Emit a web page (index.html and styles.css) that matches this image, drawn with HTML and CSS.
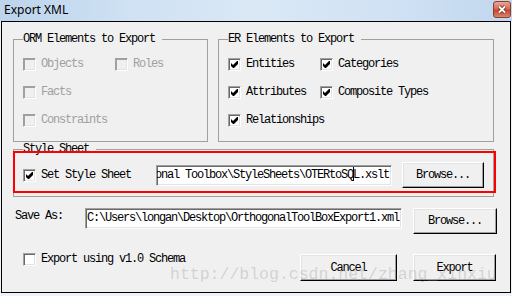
FILE: index.html
```html
<!DOCTYPE html>
<html>
<head>
<meta charset="utf-8">
<link rel="stylesheet" href="styles.css">
</head>
<body>
<div class="titlebar">
  <span class="title">Export XML</span>
  <span class="close">
    <svg width="10" height="9" viewBox="0 0 10 9">
      <path d="M2 1.5 L8 7.5 M8 1.5 L2 7.5" stroke="#6b2a1e" stroke-width="3.4" />
      <path d="M2 1.5 L8 7.5 M8 1.5 L2 7.5" stroke="#fff" stroke-width="1.8" />
    </svg>
  </span>
</div>

<div class="client">
  <div class="groups">
    <fieldset class="group orm">
      <legend>ORM Elements to Export</legend>
      <div class="options">
        <label class="check disabled"><span class="box"></span>Objects</label>
        <label class="check disabled"><span class="box"></span>Roles</label>
        <label class="check disabled"><span class="box"></span>Facts</label>
        <span></span>
        <label class="check disabled"><span class="box"></span>Constraints</label>
      </div>
    </fieldset>

    <fieldset class="group er">
      <legend>ER Elements to Export</legend>
      <div class="options">
        <label class="check"><span class="box"><svg class="tick" viewBox="0 0 7 7"><polygon points="0,2 2,4 6,0 7,0 7,3 3,7 2,7 0,5" /></svg></span>Entities</label>
        <label class="check"><span class="box"><svg class="tick" viewBox="0 0 7 7"><polygon points="0,2 2,4 6,0 7,0 7,3 3,7 2,7 0,5" /></svg></span>Categories</label>
        <label class="check"><span class="box"><svg class="tick" viewBox="0 0 7 7"><polygon points="0,2 2,4 6,0 7,0 7,3 3,7 2,7 0,5" /></svg></span>Attributes</label>
        <label class="check"><span class="box"><svg class="tick" viewBox="0 0 7 7"><polygon points="0,2 2,4 6,0 7,0 7,3 3,7 2,7 0,5" /></svg></span>Composite Types</label>
        <label class="check"><span class="box"><svg class="tick" viewBox="0 0 7 7"><polygon points="0,2 2,4 6,0 7,0 7,3 3,7 2,7 0,5" /></svg></span>Relationships</label>
      </div>
    </fieldset>
  </div>

  <fieldset class="group sheet">
    <legend>Style Sheet</legend>
    <div class="sheet-row">
      <label class="check wide"><span class="box"><svg class="tick" viewBox="0 0 7 7"><polygon points="0,2 2,4 6,0 7,0 7,3 3,7 2,7 0,5" /></svg></span>Set Style Sheet</label>
      <div class="field scroll"><span>C:\Program Files\Orthogonal Toolbox\StyleSheets\OTERtoSQ<i class="caret"></i>L.xslt</span></div>
      <button class="btn browse-sheet">Browse...</button>
    </div>
  </fieldset>

  <div class="save-row">
    <span class="save-label">Save As:</span>
    <div class="field save-field">C:\Users\longan\Desktop\OrthogonalToolBoxExport1.xml</div>
    <button class="btn browse-save">Browse...</button>
  </div>

  <div class="bottom-row">
    <label class="check legacy"><span class="box"></span>Export using v1.0 Schema</label>
    <button class="btn cancel">Cancel</button>
    <button class="btn export">Export</button>
  </div>

  <!-- annotation and watermark lie on top of the dialog -->
  <div class="mark"></div>
  <div class="watermark">http://blog.csdn.net/zhang_xinxiu</div>
</div>
</body>
</html>
```

FILE: styles.css
```css
* {
    box-sizing: border-box;
}

body {
    margin: 0;
    width: 512px;
    height: 296px;
    overflow: hidden;
    background: #edf2f8;
    color: #000;
    font: 12px/14px "Liberation Mono", monospace;
    letter-spacing: -1.2px;
}

/* title bar */
.titlebar {
    height: 21px;
    display: flex;
    align-items: flex-start;
    justify-content: space-between;
    padding-left: 4px;
    background: linear-gradient(90deg, #bcd4ec 0%, #cfe1f3 25%, #dae8f6 50%, #d1e2f4 75%, #c1d7ee 100%);
}

.title {
    font: 12px/19px "Noto Sans", sans-serif;
    letter-spacing: 0;
}

.close {
    width: 18px;
    height: 17px;
    margin: 1px 1px 0 0;
    border: 1px solid #8c3d2e;
    border-radius: 3px;
    background: linear-gradient(#eaa796, #d66a52 45%, #c4472e 55%, #d98570);
    display: flex;
    align-items: center;
    justify-content: center;
}

.close svg {
    display: block;
}

/* dialog body */
.client {
    position: relative;
    width: 510px;
    height: 272px;
    margin-left: 1px;
    border: 1px solid #000;
    background: #f0f0f0;
    padding: 10px 0 0 11px;
}

.groups {
    display: flex;
    gap: 10px;
}

.group {
    margin: 0;
    padding: 0;
    min-width: 0;
    border: 1px solid #a0a0a0;
}

.group legend {
    margin-left: 9px;
    padding: 0 7px 0 0;
    line-height: 14px;
}

.orm {
    width: 195px;
    height: 110px;
}

.er {
    width: 276px;
    height: 110px;
}

.options {
    display: grid;
    grid-template-columns: 92px auto;
    grid-auto-rows: 28px;
    padding: 4px 0 0 9px;
}

/* checkboxes */
.check {
    display: flex;
    align-items: center;
    gap: 5px;
    white-space: nowrap;
}

.box {
    flex: none;
    width: 13px;
    height: 13px;
    border: 1px solid;
    border-color: #a0a0a0 #fff #fff #a0a0a0;
    box-shadow: inset 1px 1px #696969, inset -1px -1px #e3e3e3;
    background: #fff;
}

.tick {
    display: block;
    width: 7px;
    height: 7px;
    margin: 2px;
    fill: #000;
}

.disabled {
    color: #a0a0a0;
}

.disabled .box {
    background: #f0f0f0;
    box-shadow: inset 1px 1px #a0a0a0, inset -1px -1px #e3e3e3;
}

/* style sheet group */
.sheet {
    width: 481px;
    height: 55px;
}

.sheet-row {
    display: flex;
    align-items: center;
    height: 33px;
    padding: 5px 0 0 9px;
}

.wide {
    width: 133px;
}

.field {
    height: 21px;
    border: 1px solid;
    border-color: #a0a0a0 #fff #fff #a0a0a0;
    box-shadow: inset 1px 1px #696969, inset -1px -1px #e3e3e3;
    background: #fff;
    line-height: 19px;
    padding: 0 2px 0 1px;
    white-space: nowrap;
    overflow: hidden;
}

.scroll {
    width: 236px;
    display: flex;
    justify-content: flex-end;
}

.scroll span {
    flex: none;
}

.caret {
    display: inline-block;
    width: 1px;
    height: 14px;
    margin-right: -1px;
    background: #000;
    vertical-align: -3px;
}

/* buttons */
.btn {
    height: 26px;
    padding: 0;
    border: 1px solid;
    border-color: #fff #000 #000 #fff;
    box-shadow: inset -1px -1px #a0a0a0, inset 1px 1px #e3e3e3;
    background: #f0f0f0;
    font: inherit;
    letter-spacing: inherit;
    color: #000;
}

.browse-sheet {
    width: 82px;
    margin-left: 10px;
}

/* save row */
.save-row {
    display: flex;
    align-items: flex-start;
    margin-top: 11px;
}

.save-label {
    width: 70px;
    margin-left: 2px;
    padding-top: 1px;
}

.save-field {
    width: 317px;
}

.browse-save {
    width: 84px;
    margin-left: 11px;
}

/* bottom row */
.bottom-row {
    display: flex;
    align-items: flex-start;
    margin-top: 18px;
    padding-right: 14px;
}

.legacy {
    margin: 0 auto 0 10px;
}

.cancel,
.export {
    height: 27px;
    margin-top: 2px;
}

.cancel {
    width: 97px;
}

.export {
    width: 83px;
    margin-left: 16px;
}

/* overlays */
.mark {
    position: absolute;
    left: 11px;
    top: 129px;
    width: 483px;
    height: 42px;
    border: 2px solid #f00;
}

.watermark {
    position: absolute;
    left: 168px;
    top: 244px;
    font: 16.5px/18px "Liberation Mono", monospace;
    letter-spacing: 0;
    color: rgba(130, 130, 130, 0.28);
    white-space: nowrap;
}
```
